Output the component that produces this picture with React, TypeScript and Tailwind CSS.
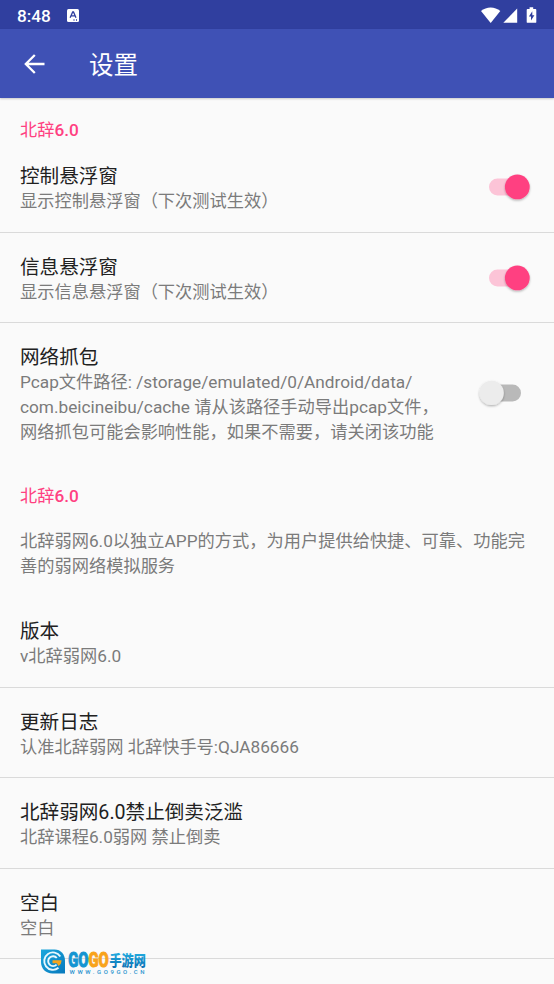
import React, { useState } from 'react';

type SwitchProps = {
  on: boolean;
  onToggle: () => void;
};

function Switch({ on, onToggle }: SwitchProps) {
  return (
    <button role="switch" aria-checked={on} onClick={onToggle} className="shrink-0">
      <svg width="60" height="42" viewBox="0 0 60 42" className="block">
        <defs>
          <filter id="thumbShadow" x="-30%" y="-30%" width="160%" height="170%">
            <feDropShadow dx="0" dy="1.2" stdDeviation="1" floodColor="#000" floodOpacity="0.3" />
          </filter>
        </defs>
        {on ? (
          <>
            <rect x="15" y="10.5" width="38" height="17" rx="8.5" fill="#fcc4d7" />
            <circle cx="43.3" cy="18.9" r="12.4" fill="#ff4081" filter="url(#thumbShadow)" />
          </>
        ) : (
          <>
            <rect x="10" y="10.5" width="37" height="17" rx="8.5" fill="#b9b9b9" />
            <circle cx="17.6" cy="18.9" r="12.2" fill="#ececec" filter="url(#thumbShadow)" />
          </>
        )}
      </svg>
    </button>
  );
}

type RowProps = {
  title: string;
  lines: string[];
  last?: boolean;
  children?: React.ReactNode;
};

function Row({ title, lines, last, children }: RowProps) {
  return (
    <div className={`flex items-center justify-between pl-5 pr-5 pt-[22px] ${last ? 'pb-[19px]' : 'border-b border-[#dadada] pb-[17.5px]'}`}>
      <div>
        <h3 className="text-[19.6px] leading-[25px] text-[#212121]">{title}</h3>
        {lines.map((line) => (
          <p key={line} className="whitespace-nowrap text-[17.24px] leading-[25px] text-[#7b7b7b]">{line}</p>
        ))}
      </div>
      {children}
    </div>
  );
}

function SectionTitle() {
  return (
    <h2 className="pl-5 pt-[20px] text-[17.2px] leading-[24px] text-[#ff4081]">
      北辞<span className="font-medium">6.0</span>
    </h2>
  );
}

function StatusBar() {
  return (
    <div className="flex h-[29px] items-center bg-[#303f9f] pl-[17px] pr-[17px] text-white">
      <span className="pt-[2px] text-[17.2px] font-medium leading-5">8:48</span>
      <svg width="12" height="13" viewBox="0 0 12 13" className="ml-[16px] mt-px">
        <rect width="12" height="13" rx="1.5" fill="#fff" />
        <path d="M3.1 8.8 5.7 2.9h.8l2.5 5.9M4.1 6.8h4M6.5 11h1M9 11h1" fill="none" stroke="#303f9f" strokeWidth="1.3" />
      </svg>
      <svg width="56" height="18" viewBox="0 0 56 18" fill="#fff" className="ml-auto">
        <path d="M0 5C5.4.3 13.9.3 19.3 5L9.7 17z" />
        <path d="M36.2 2.5v14.3H22.3z" />
        <path d="M48.6 1.3h3.6v1.8h2.3q.8 0 .8.8v12q0 .9-.8.9h-8q-.8 0-.8-.9v-12q0-.8.8-.8h2.1z" />
        <path d="M51.3 5.2 47.9 10.4h2.1v4.2l3.4-5.4h-2.1z" fill="#303f9f" />
      </svg>
    </div>
  );
}

function Watermark() {
  return (
    <div className="absolute left-[40px] top-[948px] flex">
      <svg width="26" height="27" viewBox="0 0 26 27">
        <defs>
          <linearGradient id="drop" x1="0" y1="0" x2="1" y2="1">
            <stop offset="0" stopColor="#1ba7dc" />
            <stop offset="1" stopColor="#0879bd" />
          </linearGradient>
        </defs>
        <path d="M1 1.5h13.5C21 1.5 25 6.4 25 13v12.5H12.5C5.5 25.5 1 20.5 1 14z" fill="url(#drop)" />
        <path d="M20.3 8.5A8.7 8.7 0 1 0 18.5 19.8" fill="none" stroke="#e8f8fd" strokeWidth="1.9" />
        <path d="M16.8 10A4.9 4.9 0 1 0 16.6 16.6" fill="none" stroke="#e8f8fd" strokeWidth="1.9" />
        <path d="M12.5 12.3h9q0 4-3 5.8l-1.6-2.9h-4.4z" fill="#f7a51c" />
      </svg>
      <svg width="84" height="28" viewBox="0 0 84 28" className="overflow-visible">
        <defs>
          <linearGradient id="blue" x1="0" y1="0" x2="0" y2="1">
            <stop offset="0" stopColor="#25b2e4" />
            <stop offset="1" stopColor="#0768ae" />
          </linearGradient>
        </defs>
        <g fontFamily="Roboto, 'Noto Sans CJK SC', sans-serif" fontWeight="900">
          <text x="2.2" y="18.7" fontSize="20.5" textLength="40.6" lengthAdjust="spacingAndGlyphs" strokeWidth=".9">
            <tspan fill="#1495d2" stroke="#1495d2">GO</tspan>
            <tspan fill="#f8a31b" stroke="#f8a31b">GO</tspan>
          </text>
          <text x="43.4" y="17.6" fontSize="14.5" textLength="36.5" lengthAdjust="spacingAndGlyphs" fill="url(#blue)">手游网</text>
          <text x="3.5" y="26" fontSize="6" fontWeight="500" textLength="75" fill="#2b95cf">WWW.GO9GO.CN</text>
        </g>
      </svg>
    </div>
  );
}

export default function App() {
  const [control, setControl] = useState(true);
  const [info, setInfo] = useState(true);
  const [capture, setCapture] = useState(false);

  return (
    <div className="relative h-[984px] w-[554px] overflow-hidden bg-[#fafafa] font-[Roboto,'Noto_Sans_CJK_SC',sans-serif]">
      <StatusBar />
      <header className="flex h-[69px] items-center bg-[#3f51b5] pl-[24px] text-white shadow-[0_1px_2px_rgba(0,0,0,0.2)]">
        <svg width="21" height="20" viewBox="0 0 21 20" fill="none" stroke="#fff" strokeWidth="2.3">
          <path d="M20.5 10H2M10.8 1 1.8 10l9 9" />
        </svg>
        <h1 className="ml-[44px] pt-[5px] text-[24.5px] leading-8">设置</h1>
      </header>

      <SectionTitle />
      <Row title="控制悬浮窗" lines={['显示控制悬浮窗（下次测试生效）']}>
        <Switch on={control} onToggle={() => setControl(!control)} />
      </Row>
      <Row title="信息悬浮窗" lines={['显示信息悬浮窗（下次测试生效）']}>
        <Switch on={info} onToggle={() => setInfo(!info)} />
      </Row>
      <Row
        title="网络抓包"
        lines={[
          'Pcap文件路径: /storage/emulated/0/Android/data/',
          'com.beicineibu/cache 请从该路径手动导出pcap文件，',
          '网络抓包可能会影响性能，如果不需要，请关闭该功能',
        ]}
        last
      >
        <Switch on={capture} onToggle={() => setCapture(!capture)} />
      </Row>

      <SectionTitle />
      <div className="whitespace-nowrap pb-[18.5px] pl-5 pt-[20.5px] text-[17.24px] leading-[25px] text-[#7b7b7b]">
        <p>北辞弱网6.0以独立APP的方式，为用户提供给快捷、可靠、功能完</p>
        <p>善的弱网络模拟服务</p>
      </div>
      <Row title="版本" lines={['v北辞弱网6.0']} />
      <Row title="更新日志" lines={['认准北辞弱网 北辞快手号:QJA86666']} />
      <Row title="北辞弱网6.0禁止倒卖泛滥" lines={['北辞课程6.0弱网 禁止倒卖']} />
      <Row title="空白" lines={['空白']} />
      <Watermark />
    </div>
  );
}
